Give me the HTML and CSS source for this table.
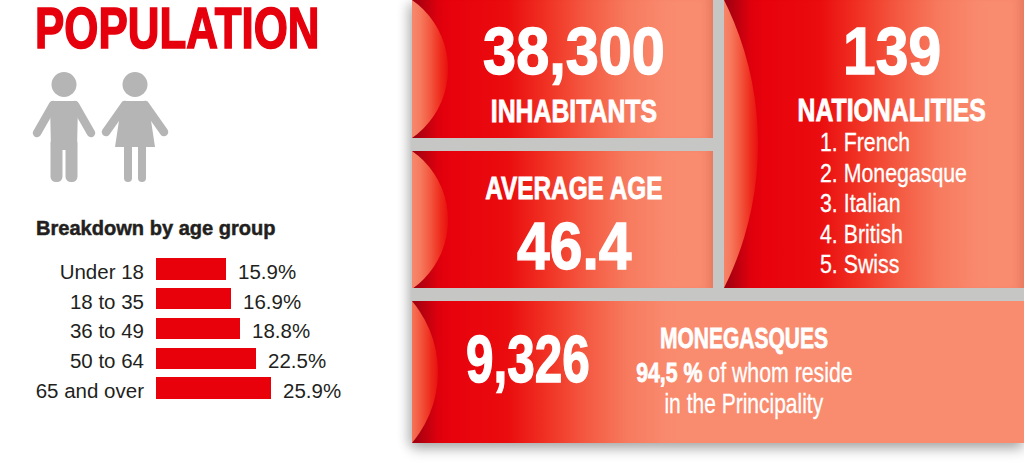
FILE: index.html
```html
<!DOCTYPE html>
<html lang="en">
<head>
<meta charset="utf-8">
<title>Population</title>
<link rel="stylesheet" href="styles.css">
</head>
<body>
<div class="page">
  <section class="left">
    <div class="title-wrap"><h1 class="title">POPULATION</h1></div>
    <svg class="people" width="145" height="120" viewBox="28 66 145 120" aria-hidden="true">
      <g fill="#b5b5b5" stroke="none">
        <circle cx="64" cy="84.5" r="12.5"/>
        <path d="M53,101 L75,101 Q78,101 78,104 L77,150 L51,150 L50,104 Q50,101 53,101 Z"/>
        <rect x="50.5" y="138" width="12" height="44" rx="5.5"/>
        <rect x="65.5" y="138" width="12" height="44" rx="5.5"/>
        <circle cx="135" cy="84.5" r="12.5"/>
        <path d="M125,101 L145,101 Q148,101 148.5,104 L155,147 L115,147 L121.5,104 Q122,101 125,101 Z"/>
        <rect x="124" y="140" width="8" height="42" rx="4"/>
        <rect x="138" y="140" width="8" height="42" rx="4"/>
      </g>
      <g stroke="#b5b5b5" stroke-width="8.5" stroke-linecap="round" fill="none">
        <line x1="53" y1="105" x2="37" y2="133"/>
        <line x1="75" y1="105" x2="91" y2="133"/>
        <line x1="125" y1="105" x2="106" y2="132"/>
        <line x1="145" y1="105" x2="164" y2="132"/>
      </g>
    </svg>
    <h2 class="breakdown">Breakdown by age group</h2>
    <div class="bars">
      <div class="row"><span class="label">Under 18</span><span class="bar" style="width:70px"></span><span class="pct">15.9%</span></div>
      <div class="row"><span class="label">18 to 35</span><span class="bar" style="width:75px"></span><span class="pct">16.9%</span></div>
      <div class="row"><span class="label">36 to 49</span><span class="bar" style="width:84px"></span><span class="pct">18.8%</span></div>
      <div class="row"><span class="label">50 to 64</span><span class="bar" style="width:100px"></span><span class="pct">22.5%</span></div>
      <div class="row"><span class="label">65 and over</span><span class="bar" style="width:115px"></span><span class="pct">25.9%</span></div>
    </div>
  </section>
  <section class="stats">
    <div class="card card-inhab">
      <div class="big big-inhab">38,300</div>
      <div class="sub sub-inhab">INHABITANTS</div>
    </div>
    <div class="card card-nat">
      <div class="big big-nat">139</div>
      <div class="sub sub-nat">NATIONALITIES</div>
      <ol class="natlist">
        <li>1. French</li>
        <li>2. Monegasque</li>
        <li>3. Italian</li>
        <li>4. British</li>
        <li>5. Swiss</li>
      </ol>
    </div>
    <div class="card card-age">
      <div class="sub sub-age">AVERAGE AGE</div>
      <div class="big big-age">46.4</div>
    </div>
    <div class="card card-mon">
      <div class="big big-mon">9,326</div>
      <div class="mon-text">
        <div class="sub sub-mon">MONEGASQUES</div>
        <div class="mon-line mon-line-1"><b>94,5 %</b> of whom reside</div>
        <div class="mon-line mon-line-2">in the Principality</div>
      </div>
    </div>
  </section>
</div>
</body>
</html>
```

FILE: styles.css
```css
:root {
  --sans: "Liberation Sans", Arial, sans-serif;
  --red: #e6000d;
  --ink: #231f20;
}

* { box-sizing: border-box; }

html, body {
  margin: 0;
  padding: 0;
  background: #ffffff;
}

body {
  width: 1024px;
  height: 464px;
  overflow: hidden;
  font-family: var(--sans);
}

.page {
  display: flex;
  align-items: flex-start;
  width: 1024px;
  height: 464px;
}

/* ---------- left column ---------- */
.left {
  width: 412px;
  flex: none;
}

.title-wrap {
  height: 57px;
  padding-left: 35px;
}

.title {
  display: inline-block;
  margin: 0;
  font-size: 57px;
  line-height: 57px;
  font-weight: 700;
  color: var(--red);
  white-space: nowrap;
  -webkit-text-stroke: 1.6px var(--red);
  transform: scaleX(0.77);
  transform-origin: left center;
}

.people {
  display: block;
  margin: 9px 0 0 28px;
}

.breakdown {
  margin: 31px 0 0 36px;
  font-size: 21px;
  line-height: 21px;
  font-weight: 700;
  color: var(--ink);
  white-space: nowrap;
  -webkit-text-stroke: 0.5px var(--ink);
  transform: scaleX(0.955);
  transform-origin: left center;
}

.bars {
  margin: 16px 0 0 0;
  display: flex;
  flex-direction: column;
}

.row {
  display: flex;
  align-items: center;
  height: 29.8px;
}

.label {
  width: 144px;
  text-align: right;
  font-size: 20.5px;
  line-height: 21px;
  padding-top: 5px;
  color: var(--ink);
  white-space: nowrap;
}

.bar {
  height: 21.5px;
  margin-left: 12px;
  background: #e8000b;
}

.pct {
  margin-left: 12px;
  font-size: 20.5px;
  line-height: 21px;
  padding-top: 5px;
  color: var(--ink);
}

/* ---------- right stats panel ---------- */
.stats {
  flex: none;
  width: 612px;
  height: 443px;
  display: grid;
  grid-template-columns: 301px 300px;
  grid-template-rows: 138px 137px 142px;
  gap: 13px 11px;
  background: #c6c7c5;
  box-shadow: 0 6px 12px rgba(0, 0, 0, 0.28), -6px 2px 10px rgba(0, 0, 0, 0.12);
}

.card {
  position: relative;
  overflow: hidden;
  color: #ffffff;
  display: flex;
  flex-direction: column;
  align-items: center;
  background: linear-gradient(90deg,
    #980012 0px, #b5000f 10px, #de000d 26px, #e8020c 40px,
    #ea0c0e 95px, #f03224 135px, #f45a42 175px, #f77a5e 215px,
    #f98a6e 255px, #f98b6f 270px);
  --bulge: 36px;
  --r: 84px;
}

.card-inhab, .card-age, .card-nat {
  box-shadow: inset -10px 0 8px -6px rgba(150, 40, 20, 0.18);
}

.card::before {
  content: "";
  position: absolute;
  width: calc(var(--r) * 2);
  height: calc(var(--r) * 2);
  left: calc(var(--bulge) - var(--r) * 2);
  top: calc(50% - var(--r));
  border-radius: 50%;
  background: linear-gradient(270deg,
    #e8100f 0px, #ee2a1c 7px, #f3543c 17px, #f6785c 27px, #f7876b 35px);
}

.card > * {
  position: relative;
}

.card-inhab {
  grid-column: 1;
  grid-row: 1;
  padding: 18px 0 0 23px;
}

.card-age {
  grid-column: 1;
  grid-row: 2;
  padding: 22px 0 0 23px;
}

.card-nat {
  grid-column: 2;
  grid-row: 1 / span 2;
  padding: 18px 0 0 36px;
  --bulge: 34px;
  --r: 322px;
}

.card-mon {
  grid-column: 1 / span 2;
  grid-row: 3;
  flex-direction: row;
  align-items: flex-start;
  padding-left: 54px;
  --bulge: 26px;
  --r: 110px;
}

.big {
  font-size: 66px;
  line-height: 66px;
  font-weight: 700;
  white-space: nowrap;
  -webkit-text-stroke: 1.4px #ffffff;
}

.sub {
  font-size: 31px;
  line-height: 31px;
  font-weight: 700;
  white-space: nowrap;
  -webkit-text-stroke: 0.8px #ffffff;
}

.big-inhab { transform: scaleX(0.9); }
.big-nat { transform: scaleX(0.89); }
.big-age { transform: scaleX(0.89); margin-top: 9px; }

.sub-inhab { margin-top: 12px; transform: scaleX(0.8); }
.sub-nat { margin-top: 11px; transform: scaleX(0.8); }
.sub-age { transform: scaleX(0.785); }

.natlist {
  list-style: none;
  align-self: flex-start;
  margin: 1px 0 0 60px;
  padding: 0;
  font-size: 26px;
  line-height: 30.5px;
  white-space: nowrap;
  -webkit-text-stroke: 0.3px #ffffff;
  transform: scaleX(0.82);
  transform-origin: left center;
}

.big-mon {
  flex: none;
  width: 126px;
  margin-top: 25px;
  transform: scaleX(0.75);
  transform-origin: left center;
}

.mon-text {
  flex: none;
  width: 216px;
  margin: 22px 0 0 44px;
  display: flex;
  flex-direction: column;
  align-items: center;
}

.sub-mon {
  font-size: 30px;
  line-height: 30px;
  transform: scaleX(0.7);
}

.mon-line {
  font-size: 28px;
  line-height: 31px;
  white-space: nowrap;
  -webkit-text-stroke: 0.3px #ffffff;
}

.mon-line-1 { margin-top: 4px; transform: scaleX(0.76); }
.mon-line-2 { transform: scaleX(0.75); }
.mon-line b { font-weight: 700; -webkit-text-stroke: 0.8px #ffffff; }
```
